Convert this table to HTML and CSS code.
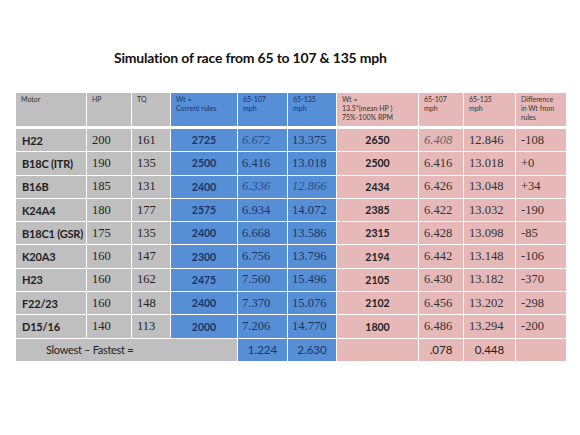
FILE: index.html
```html
<!DOCTYPE html>
<html lang="en">
<head>
  <meta charset="UTF-8">
  <title>Simulation of race</title>
  <link rel="stylesheet" href="styles.css">
</head>
<body>

<div class="slide">
  <h1 class="title">Simulation of race from 65 to 107 &amp; 135 mph</h1>

  <table class="race">
    <colgroup>
      <col style="width:71px">
      <col style="width:45px">
      <col style="width:39px">
      <col style="width:67px">
      <col style="width:50px">
      <col style="width:49px">
      <col style="width:82px">
      <col style="width:45px">
      <col style="width:52px">
      <col style="width:51px">
    </colgroup>
    <thead>
      <tr>
        <th class="g">Motor</th>
        <th class="g">HP</th>
        <th class="g">TQ</th>
        <th class="b">Wt =<br>Current rules</th>
        <th class="b">65-107<br>mph</th>
        <th class="b">65-135<br>mph</th>
        <th class="p">Wt =<br>13.5*(mean HP )<br>75%-100% RPM</th>
        <th class="p">65-107<br>mph</th>
        <th class="p">65-135<br>mph</th>
        <th class="p">Difference<br>in Wt from<br>rules</th>
      </tr>
    </thead>
    <tbody>
      <tr>
        <td class="g name">H22</td><td class="g num">200</td><td class="g num">161</td>
        <td class="b wt">2725</td><td class="b num it">6.672</td><td class="b num">13.375</td>
        <td class="p wt">2650</td><td class="p num it">6.408</td><td class="p num">12.846</td><td class="p num">-108</td>
      </tr>
      <tr>
        <td class="g name">B18C (ITR)</td><td class="g num">190</td><td class="g num">135</td>
        <td class="b wt">2500</td><td class="b num">6.416</td><td class="b num">13.018</td>
        <td class="p wt">2500</td><td class="p num">6.416</td><td class="p num">13.018</td><td class="p num">+0</td>
      </tr>
      <tr>
        <td class="g name">B16B</td><td class="g num">185</td><td class="g num">131</td>
        <td class="b wt">2400</td><td class="b num it">6.336</td><td class="b num it">12.866</td>
        <td class="p wt">2434</td><td class="p num">6.426</td><td class="p num">13.048</td><td class="p num">+34</td>
      </tr>
      <tr>
        <td class="g name">K24A4</td><td class="g num">180</td><td class="g num">177</td>
        <td class="b wt">2575</td><td class="b num">6.934</td><td class="b num">14.072</td>
        <td class="p wt">2385</td><td class="p num">6.422</td><td class="p num">13.032</td><td class="p num">-190</td>
      </tr>
      <tr>
        <td class="g name">B18C1 (GSR)</td><td class="g num">175</td><td class="g num">135</td>
        <td class="b wt">2400</td><td class="b num">6.668</td><td class="b num">13.586</td>
        <td class="p wt">2315</td><td class="p num">6.428</td><td class="p num">13.098</td><td class="p num">-85</td>
      </tr>
      <tr>
        <td class="g name">K20A3</td><td class="g num">160</td><td class="g num">147</td>
        <td class="b wt">2300</td><td class="b num">6.756</td><td class="b num">13.796</td>
        <td class="p wt">2194</td><td class="p num">6.442</td><td class="p num">13.148</td><td class="p num">-106</td>
      </tr>
      <tr>
        <td class="g name">H23</td><td class="g num">160</td><td class="g num">162</td>
        <td class="b wt">2475</td><td class="b num">7.560</td><td class="b num">15.496</td>
        <td class="p wt">2105</td><td class="p num">6.430</td><td class="p num">13.182</td><td class="p num">-370</td>
      </tr>
      <tr>
        <td class="g name">F22/23</td><td class="g num">160</td><td class="g num">148</td>
        <td class="b wt">2400</td><td class="b num">7.370</td><td class="b num">15.076</td>
        <td class="p wt">2102</td><td class="p num">6.456</td><td class="p num">13.202</td><td class="p num">-298</td>
      </tr>
      <tr>
        <td class="g name">D15/16</td><td class="g num">140</td><td class="g num">113</td>
        <td class="b wt">2000</td><td class="b num">7.206</td><td class="b num">14.770</td>
        <td class="p wt">1800</td><td class="p num">6.486</td><td class="p num">13.294</td><td class="p num">-200</td>
      </tr>
      <tr class="sum">
        <td class="g label" colspan="4">Slowest – Fastest =</td>
        <td class="b mid">1.224</td><td class="b mid">2.630</td>
        <td class="p"></td><td class="p mid">.078</td><td class="p mid">0.448</td><td class="p"></td>
      </tr>
    </tbody>
  </table>
</div>

</body>
</html>
```

FILE: styles.css
```css
body {
  margin: 0;
  background: #fff;
  font-family: Lato, "Liberation Sans", sans-serif;
}
.slide {
  width: 580px;
  height: 435px;
  padding-top: 46px;
  box-sizing: border-box;
}
.title {
  margin: 0 0 23px 114px;
  font-size: 14px;
  font-weight: 700;
  letter-spacing: -0.2px;
  line-height: 23px;
  color: #111;
}
.race {
  margin-left: 15px;
  width: 551px;
  table-layout: fixed;
  border-collapse: collapse;
}
.race th, .race td {
  border: 1px solid #fff;
  padding: 0;
}
.race th {
  height: 31px;
  border-bottom-width: 3px;
  padding: 2px 5px 0;
  vertical-align: top;
  text-align: left;
  font-size: 7px;
  line-height: 9px;
  font-weight: 400;
  color: #333;
}
.race td {
  height: 22.3px;
  vertical-align: middle;
}
.g { background: #bfbfbf; color: #222; }
.b { background: #568fd6; color: #1c3563; }
.p { background: #e6b9b8; color: #333; }
.race th.b { color: #1c3563; }

.name {
  padding-left: 6px !important;
  font-size: 11px;
  font-weight: 700;
  letter-spacing: -0.2px;
}
.num {
  padding-left: 5px !important;
  font-family: "Liberation Serif", serif;
  font-size: 12.5px;
}
.b.num { padding-left: 4px !important; }
.it { font-style: italic; }
.b.it { color: #2c4f86; }
.p.it { color: #666; }
.wt {
  text-align: center;
  font-size: 10.5px;
  font-weight: 700;
}
.p.wt { color: #222; }
.sum td {
  font-size: 11.5px;
}
.label {
  padding-left: 30px !important;
  font-size: 11px !important;
  letter-spacing: -0.3px;
  color: #222;
}
.mid {
  text-align: center;
}
.p.mid { color: #222; }
```
